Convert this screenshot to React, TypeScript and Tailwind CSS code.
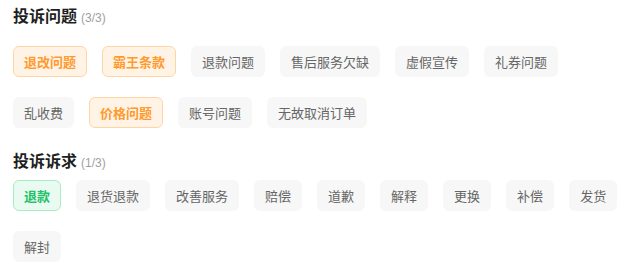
const issues = [
  { label: "退改问题", on: true },
  { label: "霸王条款", on: true },
  { label: "退款问题" },
  { label: "售后服务欠缺" },
  { label: "虚假宣传" },
  { label: "礼券问题" },
  { label: "乱收费" },
  { label: "价格问题", on: true },
  { label: "账号问题" },
  { label: "无故取消订单" },
];

const demands = [
  { label: "退款", on: true },
  { label: "退货退款" },
  { label: "改善服务" },
  { label: "赔偿" },
  { label: "道歉" },
  { label: "解释" },
  { label: "更换" },
  { label: "补偿" },
  { label: "发货" },
  { label: "解封" },
];

type Item = { label: string; on?: boolean };

function Tag({ item, tone }: { item: Item; tone: "orange" | "green" }) {
  let cls = "border-transparent bg-[#f7f7f7] text-[#666666]";
  if (item.on && tone === "orange") cls = "border-[#ffd5a5] bg-[#fff3e6] text-[#ff9a2e] font-bold";
  if (item.on && tone === "green") cls = "border-[#a8ecc5] bg-[#e9fbf0] text-[#1fc16b] font-bold";
  return (
    <span className={`flex h-[31px] items-center rounded-[6px] border px-[10px] text-[13px] leading-none ${cls}`}>
      {item.label}
    </span>
  );
}

function Title({ name, count }: { name: string; count: string }) {
  return (
    <div className="flex h-[22px] items-baseline gap-[4px] leading-[22px]">
      <span className="text-[16px] font-bold text-[#1f1f1f]">{name}</span>
      <span className="text-[12px] text-[#a0a0a0]" style={{ fontFamily: '"Liberation Sans", sans-serif' }}>
        {count}
      </span>
    </div>
  );
}

export default function App() {
  return (
    <div
      className="w-[628px] h-[268px] overflow-hidden bg-white pl-[13px] pr-[8px] pt-[4px]"
      style={{ fontFamily: '"Noto Sans CJK SC", "Noto Sans", sans-serif' }}
    >
      <Title name="投诉问题" count="(3/3)" />
      <div className="mt-[20px] flex flex-wrap gap-x-[15px] gap-y-[20px]">
        {issues.map((it) => (
          <Tag key={it.label} item={it} tone="orange" />
        ))}
      </div>
      <div className="mt-[21px]">
        <Title name="投诉诉求" count="(1/3)" />
      </div>
      <div className="mt-[9px] flex flex-wrap gap-x-[15px] gap-y-[20px]">
        {demands.map((it) => (
          <Tag key={it.label} item={it} tone="green" />
        ))}
      </div>
    </div>
  );
}
